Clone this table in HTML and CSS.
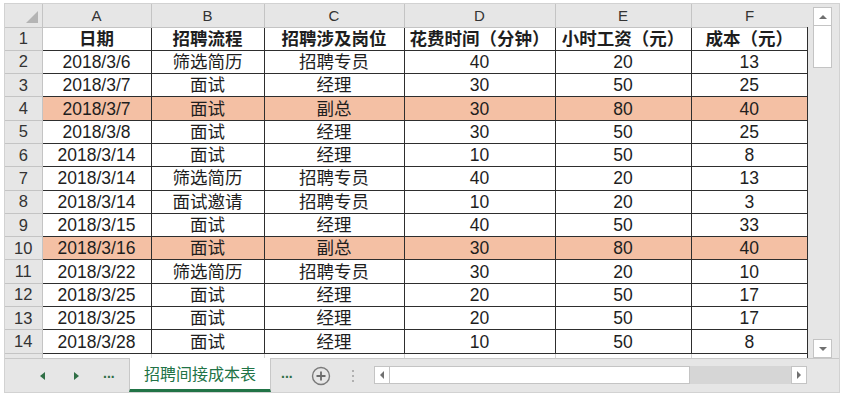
FILE: index.html
```html
<!DOCTYPE html>
<html lang="zh">
<head>
<meta charset="utf-8">
<link rel="stylesheet" href="styles.css">
</head>
<body>
<div class="app">
  <div class="main">
    <div class="sheet">
      <table class="grid">
        <colgroup>
          <col class="c-rh"><col class="c-a"><col class="c-b"><col class="c-c"><col class="c-d"><col class="c-e"><col class="c-f">
        </colgroup>
        <thead>
          <tr class="colhead">
            <th class="corner"><span class="tri"></span></th><th>A</th><th>B</th><th>C</th><th>D</th><th>E</th><th>F</th>
          </tr>
        </thead>
        <tbody>
          <tr class="title"><th>1</th><td>日期</td><td>招聘流程</td><td>招聘涉及岗位</td><td>花费时间（分钟）</td><td>小时工资（元）</td><td>成本（元）</td></tr>
          <tr><th>2</th><td>2018/3/6</td><td>筛选简历</td><td>招聘专员</td><td>40</td><td>20</td><td>13</td></tr>
          <tr><th>3</th><td>2018/3/7</td><td>面试</td><td>经理</td><td>30</td><td>50</td><td>25</td></tr>
          <tr class="hl"><th>4</th><td>2018/3/7</td><td>面试</td><td>副总</td><td>30</td><td>80</td><td>40</td></tr>
          <tr><th>5</th><td>2018/3/8</td><td>面试</td><td>经理</td><td>30</td><td>50</td><td>25</td></tr>
          <tr><th>6</th><td>2018/3/14</td><td>面试</td><td>经理</td><td>10</td><td>50</td><td>8</td></tr>
          <tr><th>7</th><td>2018/3/14</td><td>筛选简历</td><td>招聘专员</td><td>40</td><td>20</td><td>13</td></tr>
          <tr><th>8</th><td>2018/3/14</td><td>面试邀请</td><td>招聘专员</td><td>10</td><td>20</td><td>3</td></tr>
          <tr><th>9</th><td>2018/3/15</td><td>面试</td><td>经理</td><td>40</td><td>50</td><td>33</td></tr>
          <tr class="hl"><th>10</th><td>2018/3/16</td><td>面试</td><td>副总</td><td>30</td><td>80</td><td>40</td></tr>
          <tr><th>11</th><td>2018/3/22</td><td>筛选简历</td><td>招聘专员</td><td>30</td><td>20</td><td>10</td></tr>
          <tr><th>12</th><td>2018/3/25</td><td>面试</td><td>经理</td><td>20</td><td>50</td><td>17</td></tr>
          <tr><th>13</th><td>2018/3/25</td><td>面试</td><td>经理</td><td>20</td><td>50</td><td>17</td></tr>
          <tr><th>14</th><td>2018/3/28</td><td>面试</td><td>经理</td><td>10</td><td>50</td><td>8</td></tr>
          <tr class="empty"><th></th><td></td><td></td><td></td><td></td><td></td><td></td></tr>
        </tbody>
      </table>
    </div>
    <div class="vscroll">
      <div class="vbtn"><span class="arr up"></span></div>
      <div class="vthumb"></div>
      <div class="vtrack"></div>
      <div class="vbtn"><span class="arr down"></span></div>
    </div>
  </div>
  <div class="tabbar">
    <div class="nav">
      <span class="tarr left"></span>
      <span class="tarr right"></span>
      <span class="dots">...</span>
    </div>
    <div class="tab">招聘间接成本表</div>
    <span class="dots dots2">...</span>
    <span class="plus">
      <svg width="20" height="20" viewBox="0 0 20 20"><circle cx="10" cy="10" r="8.5" fill="none" stroke="#7a7a7a" stroke-width="1.4"/><path d="M10 5.5v9M5.5 10h9" stroke="#6a6a6a" stroke-width="1.8"/></svg>
    </span>
    <span class="vdots"><i></i><i></i><i></i></span>
    <div class="hscroll">
      <div class="hbtn"><span class="arr left"></span></div>
      <div class="hthumb"></div>
      <div class="htrack"></div>
      <div class="hbtn"><span class="arr right"></span></div>
    </div>
  </div>
</div>
</body>
</html>
```
FILE: styles.css
```css
* { box-sizing: border-box; }
html, body { margin: 0; padding: 0; background: #fff; }
body {
  font-family: "Liberation Sans", "Noto Sans CJK SC", sans-serif;
  color: #222;
}
.app {
  margin: 3px 0 0 4px;
  width: 836px;
  height: 390px;
  border: 1px solid #d2d2d2;
  background: #e6e6e6;
  display: flex;
  flex-direction: column;
}
.main {
  display: flex;
  height: 354px;
}
.sheet {
  width: 803px;
  height: 354px;
  overflow: hidden;
  background: #fff;
}
.grid {
  border-collapse: collapse;
  table-layout: fixed;
  width: 803px;
}
.c-rh { width: 37px; }
.c-a { width: 109px; }
.c-b { width: 113px; }
.c-c { width: 140px; }
.c-d { width: 151px; }
.c-e { width: 136px; }
.c-f { width: 117px; }

.grid th, .grid td {
  padding: 0;
  text-align: center;
  white-space: nowrap;
  overflow: hidden;
}
.colhead th {
  height: 23px;
  background: #e6e6e6;
  border: 1px solid #c4c4c4;
  border-top: none;
  font-weight: normal;
  font-size: 15px;
  color: #333;
}
.colhead th.corner { border-left: none; position: relative; }
.tri {
  position: absolute;
  right: 4px;
  bottom: 4px;
  width: 0; height: 0;
  border-style: solid;
  border-width: 0 0 12px 12px;
  border-color: transparent transparent #b4b4b4 transparent;
}
tbody th {
  background: #e6e6e6;
  border: 1px solid #c4c4c4;
  border-left: none;
  font-weight: normal;
  font-size: 16.5px;
  color: #333;
}
tbody tr { height: 23.3px; }
tbody td {
  border: 1px solid #2e2e2e;
  font-size: 17.5px;
  line-height: 20px;
  color: #1e1e1e;
}
tbody tr.title td {
  font-weight: bold;
  font-size: 17.5px;
}
tbody tr.hl td { background: #f4c0a4; }
tbody tr.empty td { border: 1px solid #d4d4d4; border-top-color: #2e2e2e; }
.grid td:last-child { border-right: 2px solid #2e2e2e; }

.vscroll {
  width: 31px;
  padding: 3px 0 0 5px;
  display: flex;
  flex-direction: column;
  background: #e6e6e6;
}
.vbtn {
  width: 19px;
  height: 19px;
  background: #fff;
  border: 1px solid #c4c4c4;
  display: flex;
  align-items: center;
  justify-content: center;
}
.vthumb {
  width: 19px;
  height: 42px;
  background: #fff;
  border: 1px solid #c4c4c4;
  border-top: none;
}
.vtrack { flex: 1; }
.arr { width: 0; height: 0; border-style: solid; }
.arr.up { border-width: 0 4px 4px 4px; border-color: transparent transparent #707070 transparent; }
.arr.down { border-width: 4px 4px 0 4px; border-color: #707070 transparent transparent transparent; }
.arr.left { border-width: 4px 4px 4px 0; border-color: transparent #707070 transparent transparent; }
.arr.right { border-width: 4px 0 4px 4px; border-color: transparent transparent transparent #707070; }

.tabbar {
  flex: 1;
  display: flex;
  align-items: stretch;
  border-top: 1px solid #c8c8c8;
  background: #e6e6e6;
}
.nav {
  width: 124px;
  display: flex;
  align-items: center;
  padding-left: 35px;
}
.tarr { width: 0; height: 0; border-style: solid; }
.tarr.left { border-width: 4px 5px 4px 0; border-color: transparent #2f6e45 transparent transparent; }
.tarr.right { margin-left: 29px; border-width: 4px 0 4px 5px; border-color: transparent transparent transparent #2f6e45; }
.dots {
  color: #2f6e45;
  font-weight: bold;
  font-size: 14px;
  letter-spacing: 0;
  line-height: 1;
  margin-left: 24px;
  padding-bottom: 6px;
  align-self: center;
}
.tab {
  width: 142px;
  margin-top: -1px;
  background: #fff;
  border-left: 1px solid #c8c8c8;
  border-right: 1px solid #c8c8c8;
  border-bottom: 3px solid #217346;
  color: #217346;
  font-family: "Noto Sans CJK SC", sans-serif;
  font-size: 16px;
  display: flex;
  align-items: center;
  justify-content: center;
  padding-bottom: 2px;
}
.dots2 { margin-left: 10px; }
.plus {
  margin-left: 18px;
  display: flex;
  align-items: center;
}
.vdots {
  margin-left: 21px;
  display: flex;
  flex-direction: column;
  justify-content: center;
  gap: 3px;
}
.vdots i { display: block; width: 2px; height: 2px; background: #b0b0b0; }
.hscroll {
  margin-left: 20px;
  width: 433px;
  height: 18px;
  align-self: center;
  margin-top: -2px;
  display: flex;
}
.hbtn {
  width: 16px;
  height: 18px;
  background: #fff;
  border: 1px solid #c4c4c4;
  display: flex;
  align-items: center;
  justify-content: center;
}
.hthumb {
  width: 300px;
  background: #fff;
  border: 1px solid #c4c4c4;
  border-left: none;
}
.htrack { flex: 1; background: #d6d6d6; }
```
